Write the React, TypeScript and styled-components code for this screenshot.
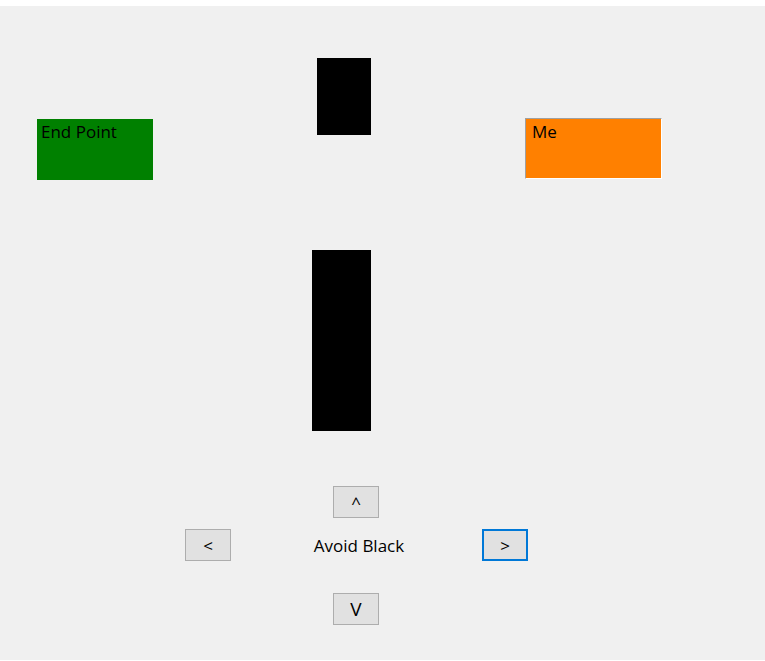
import React from "react";
import styled, { createGlobalStyle, css } from "styled-components";

const GlobalStyle = createGlobalStyle`
  html, body {
    margin: 0;
    padding: 0;
    background: #ffffff;
  }
  body {
    font-family: "Open Sans", "Noto Sans", "Liberation Sans", sans-serif;
    font-size: 17px;
    color: #000;
  }
`;

const Form = styled.div`
  margin-top: 6px;
  width: 765px;
  height: 654px;
  background: #f0f0f0;
  display: flex;
  flex-direction: column;
`;

// the play field: pieces sit at their own coordinates
const Field = styled.div`
  position: relative;
  height: 480px;
`;

interface PieceProps {
  x: number;
  y: number;
  w: number;
  h: number;
}

const Piece = styled.div<PieceProps>`
  position: absolute;
  box-sizing: border-box;
  left: ${({ x }) => x}px;
  top: ${({ y }) => y}px;
  width: ${({ w }) => w}px;
  height: ${({ h }) => h}px;
`;

const Wall = styled(Piece)`
  background: #000;
`;

const Goal = styled(Piece)`
  background: #008000;
  padding: 1px 4px;
`;

const Player = styled(Piece)`
  background: #ff8000;
  border-top: 1px solid #a0a0a0;
  border-left: 1px solid #a0a0a0;
  border-right: 1px solid #ffffff;
  border-bottom: 1px solid #ffffff;
  padding: 1px 6px;
`;

const Pad = styled.div`
  display: grid;
  grid-template-columns: 46px 46px 46px;
  grid-template-rows: 32px 32px 32px;
  column-gap: 102px;
  row-gap: 11px;
  margin-left: 185px;
`;

const Key = styled.button<{ focused?: boolean }>`
  box-sizing: border-box;
  width: 46px;
  height: 32px;
  padding: 0;
  background: #e1e1e1;
  border: 1px solid #adadad;
  border-radius: 0;
  font-family: inherit;
  font-size: 17px;
  color: #000;
  display: flex;
  align-items: center;
  justify-content: center;
  ${({ focused }) =>
    focused &&
    css`
      border: 2px solid #0078d7;
    `}
`;

const UpKey = styled(Key)`
  grid-column: 2;
  grid-row: 1;
`;

const LeftKey = styled(Key)`
  grid-column: 1;
  grid-row: 2;
`;

const RightKey = styled(Key)`
  grid-column: 3;
  grid-row: 2;
  margin-left: 1px;
`;

const DownKey = styled(Key)`
  grid-column: 2;
  grid-row: 3;
  margin-top: 21px;
  font-size: 19px;
`;

const Status = styled.div`
  grid-column: 2;
  grid-row: 2;
  justify-self: center;
  align-self: center;
  white-space: nowrap;
  margin-left: 6px;
`;

const App = () => {
  return (
    <>
      <GlobalStyle />
      <Form>
        <Field>
          <Wall x={317} y={52} w={54} h={77} />
          <Wall x={312} y={244} w={59} h={181} />
          <Goal x={37} y={113} w={116} h={61}>
            End Point
          </Goal>
          <Player x={525} y={112} w={137} h={61}>
            Me
          </Player>
        </Field>
        <Pad>
          <UpKey>^</UpKey>
          <LeftKey>&lt;</LeftKey>
          <Status>Avoid Black</Status>
          <RightKey focused>&gt;</RightKey>
          <DownKey>V</DownKey>
        </Pad>
      </Form>
    </>
  );
};

export default App;
